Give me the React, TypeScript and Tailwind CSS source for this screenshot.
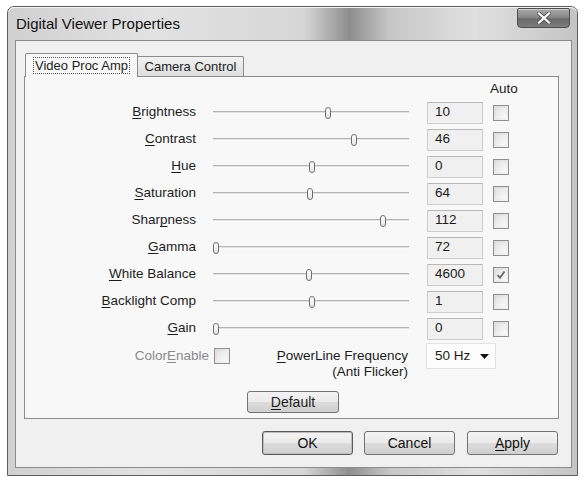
import React from 'react';

type Row = { label: string; key: number; value: string; thumb: number; checked?: boolean };

const rows: Row[] = [
  { label: 'Brightness', key: 0, value: '10', thumb: 115 },
  { label: 'Contrast', key: 0, value: '46', thumb: 141 },
  { label: 'Hue', key: 0, value: '0', thumb: 99 },
  { label: 'Saturation', key: 0, value: '64', thumb: 97 },
  { label: 'Sharpness', key: 4, value: '112', thumb: 170 },
  { label: 'Gamma', key: 0, value: '72', thumb: 3 },
  { label: 'White Balance', key: 0, value: '4600', thumb: 96, checked: true },
  { label: 'Backlight Comp', key: 0, value: '1', thumb: 99 },
  { label: 'Gain', key: 0, value: '0', thumb: 3 },
];

function Mnemonic({ text, at }: { text: string; at: number }) {
  return (
    <>
      {text.slice(0, at)}
      <span className="underline underline-offset-[2px]">{text[at]}</span>
      {text.slice(at + 1)}
    </>
  );
}

function Checkbox({ checked }: { checked?: boolean }) {
  return (
    <div className="w-[16px] h-[16px] border border-[#8f8f8f] bg-gradient-to-br from-[#dcdcdc] to-[#f6f6f6] p-[2px] shrink-0">
      <div className="w-full h-full bg-gradient-to-br from-[#e4e4e4] to-[#fafafa] flex items-center justify-center">
        {checked && (
          <svg width="10" height="10" viewBox="0 0 10 10">
            <path d="M1.5 5 L4 7.8 L8.5 1.5" fill="none" stroke="#6a6a6a" strokeWidth="1.8" />
          </svg>
        )}
      </div>
    </div>
  );
}

function Slider({ thumb }: { thumb: number }) {
  return (
    <div className="relative ml-[17px] w-[196px] h-[14px] flex items-center">
      <div className="w-full h-[3px] border-t border-[#b4b4b4] border-b border-b-[#fbfbfb] bg-[#e2e2e2]" />
      <div
        className="absolute top-[1px] w-[6px] h-[12px] rounded-[3px] border border-[#6e6e6e] bg-gradient-to-b from-white to-[#e6e6e6]"
        style={{ left: thumb - 3 }}
      />
    </div>
  );
}

function Button({ children, primary }: { children: React.ReactNode; primary?: boolean }) {
  return (
    <div
      className={`w-[91px] h-[24px] rounded-[3px] border ${primary ? 'border-[#5a5a5a] shadow-[inset_0_0_0_1px_#bdbdbd]' : 'border-[#737373]'} bg-[linear-gradient(#f3f3f3_0%,#ebebeb_48%,#dcdcdc_52%,#cfcfcf_100%)] flex items-center justify-center text-[14px] text-[#111]`}
    >
      {children}
    </div>
  );
}

export default function App() {
  return (
    <div className="w-[588px] h-[482px] bg-white overflow-hidden font-['Liberation_Sans',Arial,sans-serif] text-[#1c1c1c] pt-[6px] pl-[7px]">
      <div className="w-[571px] h-[470px] rounded-t-[7px] border border-[#5e5e5e] bg-[linear-gradient(90deg,#d0d0d0_0%,#e2e2e2_25%,#d6d6d6_52%,#8e8e8e_60%,#c6c6c6_67%,#e0e0e0_82%,#c4c4c4_100%)] flex flex-col">
        <div className="h-[33px] flex items-start justify-between shadow-[inset_0_1px_0_#f4f4f4] rounded-t-[6px]">
          <div className="pl-[8px] pt-[6px] text-[15px] text-[#111]">Digital Viewer Properties</div>
          <div className="mr-[7px] mt-[1px] w-[53px] h-[20px] rounded-b-[4px] rounded-t-[2px] border border-[#4e4e4e] bg-[linear-gradient(#a8a8a8_0%,#8a8a8a_45%,#6a6a6a_55%,#7c7c7c_100%)] shadow-[inset_0_1px_0_#cfcfcf] flex items-center justify-center">
            <svg width="14" height="12" viewBox="0 0 14 12">
              <path d="M2 1.5 L12 10.5 M12 1.5 L2 10.5" stroke="#555" strokeWidth="4" strokeLinecap="square" />
              <path d="M2 1.5 L12 10.5 M12 1.5 L2 10.5" stroke="#fff" strokeWidth="2.2" strokeLinecap="square" />
            </svg>
          </div>
        </div>

        <div className="ml-[7px] w-[557px] h-[428px] border border-[#8c8c8c] bg-[#f0f0f0] flex flex-col">
          <div className="flex items-end ml-[9px] mt-[11px] h-[24px]">
            <div className="relative z-10 w-[113px] h-[24px] -mb-[1px] border border-b-0 border-[#8c8c8c] rounded-t-[2px] bg-[#f8f8f8] flex items-center justify-center">
              <span className="border border-dotted border-[#555] px-[1px] leading-[15px] text-[13px]">Video Proc Amp</span>
            </div>
            <div className="w-[106px] h-[20px] border border-b-0 border-l-0 border-[#8c8c8c] rounded-tr-[2px] bg-[linear-gradient(#f2f2f2,#dedede)] flex items-center justify-center text-[13px]">
              Camera Control
            </div>
          </div>

          <div className="ml-[8px] w-[535px] h-[343px] border border-[#8c8c8c] bg-[#f8f8f8] flex flex-col text-[13.5px]">
            <div className="h-[22px] flex items-center pl-[465px] pt-[2px]">Auto</div>
            {rows.map((r) => (
              <div key={r.label} className="h-[27px] flex items-center">
                <div className="w-[171px] text-right whitespace-nowrap">
                  <Mnemonic text={r.label} at={r.key} />
                </div>
                <Slider thumb={r.thumb} />
                <div className="ml-[18px] w-[56px] h-[22px] border border-[#cdcdcd] border-t-[#b8b8b8] bg-[#f0f0f0] flex items-center pl-[7px] shrink-0">
                  {r.value}
                </div>
                <div className="ml-[10px]">
                  <Checkbox checked={r.checked} />
                </div>
              </div>
            ))}

            <div className="flex items-start mt-[1px] h-[27px]">
              <div className="w-[184px] mt-[5px] text-right text-[#8a8a8a] leading-[16px]">
                Color<span className="underline underline-offset-[2px]">E</span>nable
              </div>
              <div className="ml-[5px] mt-[5px]">
                <Checkbox />
              </div>
              <div className="w-[178px] mt-[5px] text-right leading-[16px]">
                <div>
                  <Mnemonic text="PowerLine Frequency" at={0} />
                </div>
                <div>(Anti Flicker)</div>
              </div>
              <div className="ml-[18px] w-[70px] h-[26px] border border-[#e2e2e2] bg-[#fdfdfd] flex items-center justify-between pl-[8px] pr-[6px]">
                <span>50 Hz</span>
                <svg width="9" height="5" viewBox="0 0 9 5">
                  <path d="M0 0 L9 0 L4.5 5 Z" fill="#111" />
                </svg>
              </div>
            </div>

            <div className="ml-[222px] mt-[21px] w-[92px]">
              <div className="w-[92px] h-[22px] rounded-[3px] border border-[#737373] bg-[linear-gradient(#f3f3f3_0%,#ebebeb_48%,#dcdcdc_52%,#cfcfcf_100%)] flex items-center justify-center text-[14px]">
                <Mnemonic text="Default" at={0} />
              </div>
            </div>
          </div>

          <div className="flex justify-end mt-[12px] mr-[13px]">
            <Button primary>OK</Button>
            <div className="ml-[11px]">
              <Button>Cancel</Button>
            </div>
            <div className="ml-[12px]">
              <Button>
                <Mnemonic text="Apply" at={0} />
              </Button>
            </div>
          </div>
        </div>
      </div>
    </div>
  );
}
